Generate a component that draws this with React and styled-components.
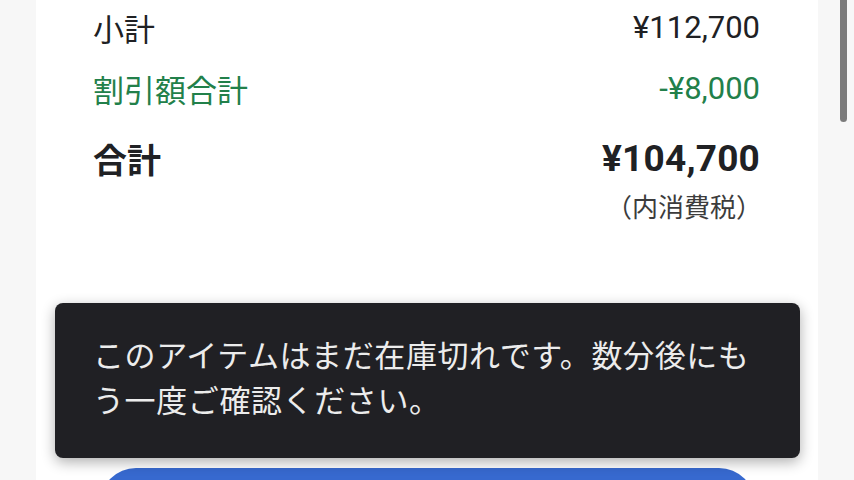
import React from "react";
import styled, { createGlobalStyle } from "styled-components";

const Global = createGlobalStyle`
  html, body {
    margin: 0;
    padding: 0;
    background: #f7f7f7;
    overflow: hidden;
  }
  body {
    font-family: Roboto, "Noto Sans CJK JP", sans-serif;
    color: #202124;
  }
`;

const Screen = styled.div`
  position: relative;
  width: 854px;
  height: 480px;
  overflow: hidden;
  background: #f7f7f7;
`;

const Card = styled.main`
  margin: 0 36px;
  height: 100%;
  background: #ffffff;
  padding: 7px 58px 0 57px;
  box-sizing: border-box;
  display: flex;
  flex-direction: column;
`;

const Row = styled.div`
  display: flex;
  justify-content: space-between;
  align-items: center;
  height: ${(p) => (p.$total ? 44 : 40)}px;
  margin-top: ${(p) => p.$gap || 0}px;
  color: ${(p) => (p.$discount ? "#22804a" : "#202124")};
  font-size: ${(p) => (p.$total ? 34 : 31)}px;
  font-weight: ${(p) => (p.$total ? 700 : 400)};
`;

const Amount = styled.span`
  font-size: ${(p) => (p.$total ? 37 : 31)}px;
  letter-spacing: ${(p) => (p.$total ? "0.2px" : "0")};
`;

const TaxNote = styled.div`
  align-self: flex-end;
  margin-top: 13px;
  margin-right: -2px;
  font-size: 26px;
  line-height: 30px;
  color: #3c3c3c;
`;

const CheckoutButton = styled.button`
  margin: 245px 5px 0 7px;
  height: 72px;
  border: none;
  border-radius: 40px;
  background: #3769cf;
  flex-shrink: 0;
`;

const Snackbar = styled.div`
  position: absolute;
  left: 55px;
  top: 303px;
  width: 745px;
  height: 155px;
  box-sizing: border-box;
  padding: 31px 38px 0 38px;
  border-radius: 8px;
  background: #202024;
  color: #ececec;
  font-size: 31px;
  line-height: 45px;
  letter-spacing: 0.6px;
  box-shadow: 0 4px 14px rgba(0, 0, 0, 0.32);
`;

const ScrollThumb = styled.div`
  position: absolute;
  right: 7px;
  top: -10px;
  width: 7px;
  height: 132px;
  border-radius: 4px;
  background: #7b7b7b;
`;

export default function App() {
  return (
    <>
      <Global />
      <Screen>
        <Card>
          <Row>
            <span>小計</span>
            <Amount>¥112,700</Amount>
          </Row>
          <Row $discount $gap={21}>
            <span>割引額合計</span>
            <Amount>-¥8,000</Amount>
          </Row>
          <Row $total $gap={28}>
            <span>合計</span>
            <Amount $total>¥104,700</Amount>
          </Row>
          <TaxNote>（内消費税）</TaxNote>
          <CheckoutButton aria-label="購入手続きへ" />
        </Card>
        <ScrollThumb />
        <Snackbar>
          このアイテムはまだ在庫切れです。数分後にもう一度ご確認ください。
        </Snackbar>
      </Screen>
    </>
  );
}
